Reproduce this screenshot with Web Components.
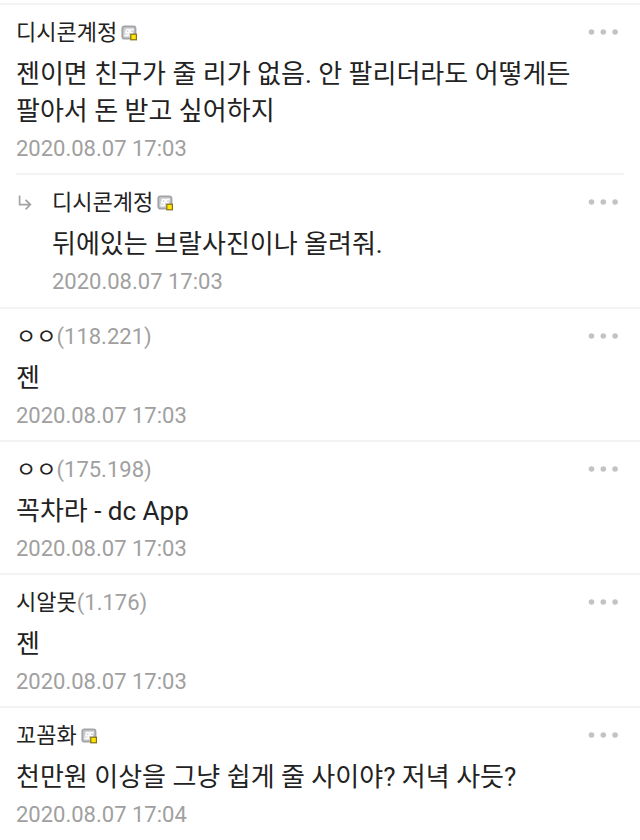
<!DOCTYPE html>
<html lang="ko">
<head>
<meta charset="utf-8">
<meta name="viewport" content="width=device-width, initial-scale=1">
<title>댓글</title>
<style>
    body {
        margin: 0;
        background: #fff;
        color: #222;
        font-family: Roboto, "Noto Sans CJK KR", sans-serif;
    }
</style>
</head>
<body>

<template id="member-badge">
    <style>
        :host {
            display: block;
            width: 16px;
            height: 16px;
        }
        svg {
            display: block;
        }
    </style>
    <svg width="16" height="16" viewBox="0 0 16 16" aria-hidden="true">
        <rect x="1.3" y="1.3" width="13.2" height="12.4" rx="2" fill="#c9cacc" stroke="#a3a4a7" stroke-width="1.8"/>
        <path d="M4.6 3.4h8.4l-1.8 8H2.7z" fill="#e4e5e6"/>
        <path d="M8.4 4.6H5.8L5 7.6h2.6L8.4 4.6 6.9 10.6H3.8M12.4 4.6H10L9.2 7.6h2.4" fill="none" stroke="#fff" stroke-width="1.2"/>
        <path d="M6.3 6.1h.9M10.4 6.1h.9M9 9H8" fill="none" stroke="#b3b4b7"/>
        <rect x="9.8" y="9.2" width="5.6" height="5.6" fill="#ffe600" stroke="#86711c" stroke-width="1.2"/>
    </svg>
</template>

<template id="more-button">
    <style>
        :host {
            display: block;
        }
        button {
            display: flex;
            align-items: center;
            height: 32px;
            margin: 0;
            padding: 0 6px;
            border: 0;
            background: none;
            cursor: pointer;
        }
    </style>
    <button type="button" aria-label="더보기">
        <svg width="30" height="8" viewBox="0 0 30 8" fill="#c3c3c3" aria-hidden="true">
            <circle cx="3.5" cy="3" r="2.8"/>
            <circle cx="15.3" cy="3" r="2.8"/>
            <circle cx="27.1" cy="3" r="2.8"/>
        </svg>
    </button>
</template>

<template id="comment-item">
    <style>
        :host {
            display: block;
            border-top: 2px solid #f3f3f3;
            padding: 12px 16px 8px;
        }
        :host([reply]) {
            display: flex;
            margin: 0 16px;
            padding: 12px 0 9px;
        }
        .arrow {
            display: none;
            flex: none;
            width: 36px;
            height: 32px;
        }
        :host([reply]) .arrow {
            display: block;
        }
        article {
            flex: 1;
            min-width: 0;
        }
        header {
            display: flex;
            align-items: center;
            height: 32px;
            font-size: 22px;
            line-height: 32px;
        }
        .ip {
            color: #a0a0a0;
        }
        member-badge {
            margin-left: 4px;
        }
        more-button {
            margin-left: auto;
        }
        p {
            margin: 7px 0 0;
            font-size: 26px;
            line-height: 37px;
            word-break: keep-all;
        }
        time {
            display: block;
            margin-top: 3px;
            color: #a0a0a0;
            font-size: 22px;
            line-height: 32px;
        }
    </style>
    <svg class="arrow" width="36" height="32" viewBox="0 0 36 32" fill="none" stroke="#a3a3a3" stroke-width="1.7" aria-hidden="true">
        <path d="M3.6 8.6v9h10.6M9.6 12.8l4.8 4.8-4.8 4.8"/>
    </svg>
    <article>
        <header>
            <span class="name"></span>
            <span class="ip"></span>
            <more-button></more-button>
        </header>
        <p><slot></slot></p>
        <time></time>
    </article>
</template>

<template id="comment-list">
    <style>
        :host {
            display: block;
            padding-top: 3px;
        }
    </style>
    <slot></slot>
</template>

<comment-list>
    <comment-item name="디시콘계정" member date="2020.08.07 17:03">젠이면 친구가 줄 리가 없음. 안 팔리더라도 어떻게든 팔아서 돈 받고 싶어하지</comment-item>
    <comment-item name="디시콘계정" member reply date="2020.08.07 17:03">뒤에있는 브랄사진이나 올려줘.</comment-item>
    <comment-item name="ㅇㅇ" ip="118.221" date="2020.08.07 17:03">젠</comment-item>
    <comment-item name="ㅇㅇ" ip="175.198" date="2020.08.07 17:03">꼭차라 - dc App</comment-item>
    <comment-item name="시알못" ip="1.176" date="2020.08.07 17:03">젠</comment-item>
    <comment-item name="꼬꼼화" member date="2020.08.07 17:04">천만원 이상을 그냥 쉽게 줄 사이야? 저녁 사듯?</comment-item>
</comment-list>

<script>
function attach (element, id) {
    const template = document.getElementById(id);
    const root = element.attachShadow({ mode: 'open' });
    root.appendChild(template.content.cloneNode(true));
    return root;
}

class MemberBadge extends HTMLElement {

    constructor () {
        super();
        attach(this, 'member-badge');
    }

}

class MoreButton extends HTMLElement {

    constructor () {
        super();
        attach(this, 'more-button');
    }

}

class CommentItem extends HTMLElement {

    constructor () {
        super();
        this._shadowRoot = attach(this, 'comment-item');

        this.$name = this._shadowRoot.querySelector('.name');
        this.$ip = this._shadowRoot.querySelector('.ip');
        this.$time = this._shadowRoot.querySelector('time');
    }

    connectedCallback () {
        const ip = this.getAttribute('ip');
        const date = this.getAttribute('date');

        this.$name.textContent = this.getAttribute('name');
        this.$ip.textContent = ip ? `(${ip})` : '';
        this.$time.textContent = date;
        this.$time.dateTime = date.replace(/\./g, '-');

        if (this.hasAttribute('member')) {
            this.$ip.replaceWith(document.createElement('member-badge'));
        }
    }

}

class CommentList extends HTMLElement {

    constructor () {
        super();
        attach(this, 'comment-list');
    }

}

customElements.define('member-badge', MemberBadge);
customElements.define('more-button', MoreButton);
customElements.define('comment-item', CommentItem);
customElements.define('comment-list', CommentList);
</script>
</body>
</html>
